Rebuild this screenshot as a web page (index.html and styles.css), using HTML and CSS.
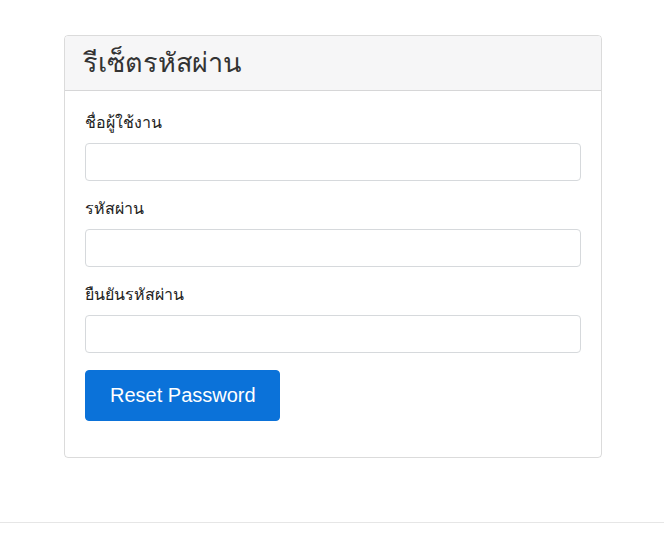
FILE: index.html
```html
<!DOCTYPE html>
<html lang="th">
<head>
<meta charset="utf-8">
<title>รีเซ็ตรหัสผ่าน</title>
<link rel="stylesheet" href="styles.css">
</head>
<body>
<main class="page">
  <section class="card">
    <header class="card-header">
      <h1 class="card-title">รีเซ็ตรหัสผ่าน</h1>
    </header>
    <form class="card-body">
      <div class="form-group">
        <label class="form-label" for="username">ชื่อผู้ใช้งาน</label>
        <input class="form-control" id="username" type="text">
      </div>
      <div class="form-group">
        <label class="form-label" for="password">รหัสผ่าน</label>
        <input class="form-control" id="password" type="password">
      </div>
      <div class="form-group">
        <label class="form-label" for="confirm">ยืนยันรหัสผ่าน</label>
        <input class="form-control" id="confirm" type="password">
      </div>
      <div class="form-group">
        <button class="btn-primary" type="button">Reset Password</button>
      </div>
    </form>
  </section>
</main>
<footer class="footer"></footer>
</body>
</html>
```
FILE: styles.css
```css
* { box-sizing: border-box; }
html, body { margin: 0; padding: 0; background: #fff; }
body {
  font-family: "Liberation Sans", "DejaVu Sans", sans-serif;
  font-size: 16px;
  line-height: 1.5;
  color: #212529;
}
.page {
  display: flex;
  justify-content: center;
  padding: 35px 0 0 2px;
  height: 522px;
}
.card {
  width: 538px;
  height: 423px;
  border: 1px solid rgba(0,0,0,.14);
  border-radius: 4px;
  display: flex;
  flex-direction: column;
}
.card-header {
  background: #f6f6f7;
  border-bottom: 1px solid rgba(0,0,0,.13);
  padding: 12px 18px;
  height: 55px;
  display: flex;
  align-items: center;
  border-radius: 3px 3px 0 0;
}
.card-title {
  margin: 0;
  font-size: 27px;
  font-weight: 500;
  line-height: 1.2;
  color: #333;
}
.card-body {
  padding: 20px 20px;
  margin: 0;
}
.form-group { margin-bottom: 16px; display: flex; flex-direction: column; align-items: flex-start; }
.form-label {
  display: block;
  margin-bottom: 8px;
  font-size: 16px;
  line-height: 24px;
  color: #222;
}
.form-control {
  width: 100%;
  height: 38px;
  border: 1px solid #d6d9dc;
  border-radius: 4px;
  background: #fff;
  padding: 6px 12px;
  font: inherit;
}
.btn-primary {
  background: #0b72d9;
  color: #fff;
  border: 1px solid #0b72d9;
  border-radius: 4px;
  font-family: "Liberation Sans", Arial, sans-serif;
  font-size: 20px;
  line-height: 30px;
  padding: 9px 24px 10px;
  height: 51px;
  width: 195px;
  white-space: nowrap;
  margin-top: 1px;
}
.footer {
  border-top: 1px solid #e6e6e6;
  height: 17px;
}
```
